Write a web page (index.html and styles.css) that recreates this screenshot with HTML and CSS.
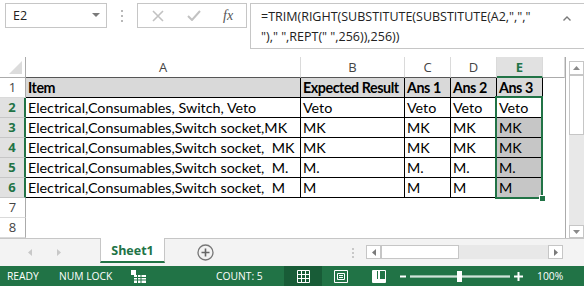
FILE: index.html
```html
<!DOCTYPE html>
<html>
<head>
  <title>Sheet1 - Excel</title>
  <link rel="stylesheet" href="styles.css">
</head>
<body>
  <div class="formula-bar">
    <div class="name-box">
      <span>E2</span>
      <svg width="8" height="5" viewBox="0 0 8 5"><path d="M0 0h8L4 4z" fill="#7a7a7a"/></svg>
    </div>
    <div class="grip"><span></span><span></span><span></span></div>
    <div class="fx-box">
      <svg class="fx-x" width="12" height="12" viewBox="0 0 12 12"><path d="M1 1l10 10M11 1L1 11" stroke="#c2c2c2" stroke-width="1.6"/></svg>
      <svg class="fx-ok" width="14" height="11" viewBox="0 0 14 11"><path d="M1 6l4 4L13 1" stroke="#c2c2c2" stroke-width="2" fill="none"/></svg>
      <span class="fx">fx</span>
    </div>
    <div class="formula">
      <div class="formula-text">
        <div class="fline">=TRIM(RIGHT(SUBSTITUTE(SUBSTITUTE(A2,",","</div>
        <div class="fline">")," ",REPT(" ",256)),256))</div>
      </div>
      <svg class="formula-caret" width="8" height="5" viewBox="0 0 8 5"><path d="M0.5 4.5L4 1l3.5 3.5" stroke="#7a7a7a" stroke-width="1.4" fill="none"/></svg>
    </div>
  </div>

  <div class="sheet-wrap">
    <div class="grid">
      <div class="corner"><svg width="13" height="13" viewBox="0 0 13 13"><path d="M13 0v13H0z" fill="#dcdcdc"/></svg></div>
      <div class="col-head t">A</div>
      <div class="col-head t">B</div>
      <div class="col-head t">C</div>
      <div class="col-head t">D</div>
      <div class="col-head sel">E</div>
      <div class="col-head"></div>

      <div class="row-head">1</div>
      <div class="c hd">Item</div>
      <div class="c hd">Expected Result</div>
      <div class="c hd">Ans 1</div>
      <div class="c hd">Ans 2</div>
      <div class="c hd">Ans 3</div>
      <div class="blank"></div>

      <div class="row-head sel">2</div>
      <div class="c">Electrical,Consumables, Switch, Veto</div>
      <div class="c">Veto</div>
      <div class="c">Veto</div>
      <div class="c">Veto</div>
      <div class="c">Veto</div>
      <div class="blank"></div>

      <div class="row-head sel">3</div>
      <div class="c">Electrical,Consumables,Switch socket,MK</div>
      <div class="c">MK</div>
      <div class="c">MK</div>
      <div class="c">MK</div>
      <div class="c picked">MK</div>
      <div class="blank"></div>

      <div class="row-head sel">4</div>
      <div class="c">Electrical,Consumables,Switch socket,&nbsp; MK</div>
      <div class="c">MK</div>
      <div class="c">MK</div>
      <div class="c">MK</div>
      <div class="c picked">MK</div>
      <div class="blank"></div>

      <div class="row-head sel">5</div>
      <div class="c">Electrical,Consumables,Switch socket,&nbsp; M.</div>
      <div class="c">M.</div>
      <div class="c">M.</div>
      <div class="c">M.</div>
      <div class="c picked">M.</div>
      <div class="blank"></div>

      <div class="row-head sel">6</div>
      <div class="c">Electrical,Consumables,Switch socket,&nbsp; M</div>
      <div class="c">M</div>
      <div class="c">M</div>
      <div class="c">M</div>
      <div class="c picked">M</div>
      <div class="blank"></div>

      <div class="row-head">7</div>
      <div class="blank wide"></div>
      <div class="row-head">8</div>
      <div class="blank wide"></div>
    </div>

    <div class="selection"></div>
    <div class="fill-handle"></div>

    <div class="vscroll">
      <div class="sb-btn"><svg width="7" height="4" viewBox="0 0 7 4"><path d="M0 4h7L3.5 0z" fill="#8a8a8a"/></svg></div>
      <div class="sb-thumb v"></div>
      <div class="sb-track"></div>
      <div class="sb-btn"><svg width="7" height="4" viewBox="0 0 7 4"><path d="M0 0h7L3.5 4z" fill="#8a8a8a"/></svg></div>
    </div>
  </div>

  <div class="tabs">
    <div class="tab-nav">
      <svg width="4" height="7" viewBox="0 0 4 7"><path d="M4 0v7L0 3.5z" fill="#c8c8c8"/></svg>
      <svg width="4" height="7" viewBox="0 0 4 7"><path d="M0 0v7l4-3.5z" fill="#c8c8c8"/></svg>
    </div>
    <div class="tab">Sheet1</div>
    <div class="add-sheet">
      <svg width="17" height="17" viewBox="0 0 17 17"><circle cx="8.5" cy="8.5" r="7.5" fill="none" stroke="#777" stroke-width="1.3"/><path d="M8.5 4.5v8M4.5 8.5h8" stroke="#666" stroke-width="1.6"/></svg>
    </div>
    <div class="grip h"><span></span><span></span><span></span></div>
    <div class="hscroll">
      <div class="sb-btn"><svg width="4" height="7" viewBox="0 0 4 7"><path d="M4 0v7L0 3.5z" fill="#7a7a7a"/></svg></div>
      <div class="sb-thumb h"></div>
      <div class="sb-track"></div>
      <div class="sb-btn"><svg width="4" height="7" viewBox="0 0 4 7"><path d="M0 0v7l4-3.5z" fill="#7a7a7a"/></svg></div>
    </div>
  </div>

  <div class="status">
    <span class="st ready">READY</span>
    <span class="st numlock">NUM LOCK</span>
    <span class="st macro">
      <svg width="15" height="13" viewBox="0 0 15 13">
        <rect x="0" y="0" width="5" height="5" fill="#fff"/>
        <rect x="3" y="5" width="12" height="8" fill="#fff"/>
        <path d="M3 7.5h12M3 10h12M6.5 5v8M10 5v8" stroke="#217346" stroke-width="1"/>
      </svg>
    </span>
    <span class="st count">COUNT: 5</span>
    <span class="view active">
      <svg width="13" height="13" viewBox="0 0 13 13"><path d="M0.5 0.5h12v12h-12zM4.5 0.5v12M8.5 0.5v12M0.5 4.5h12M0.5 8.5h12" stroke="#fff" fill="none"/></svg>
    </span>
    <span class="view">
      <svg width="14" height="13" viewBox="0 0 14 13"><path d="M0.5 0.5h13v12h-13zM3.5 3.5h7v6h-7zM5 5.5h4M5 7.5h4" stroke="#fff" fill="none"/></svg>
    </span>
    <span class="view">
      <svg width="14" height="13" viewBox="0 0 14 13"><path d="M0.5 0.5h13v12h-13z" stroke="#fff" fill="none"/><rect x="1" y="1" width="4" height="8" fill="#fff"/><rect x="6" y="1" width="2" height="11" fill="#fff"/><rect x="1" y="9" width="12" height="3" fill="#fff"/></svg>
    </span>
    <span class="zoom">
      <svg width="128" height="13" viewBox="0 0 128 13"><path d="M0 6.5h6M10 6.5h100M114 6.5h9M118.5 2v9" stroke="#fff" stroke-width="2"/><path d="M10 6.5h100" stroke="#cfe3d8" stroke-width="1"/><rect x="57" y="1" width="5" height="11" fill="#fff"/></svg>
    </span>
    <span class="st pct">100%</span>
  </div>
</body>
</html>
```

FILE: styles.css
```css
* {
  margin: 0;
  padding: 0;
  box-sizing: border-box;
}

body {
  width: 584px;
  height: 286px;
  overflow: hidden;
  background: #fff;
  font-family: 'Open Sans', 'Liberation Sans', sans-serif;
  color: #222;
}

/* Formula bar */
.formula-bar {
  display: flex;
  align-items: flex-start;
  height: 57px;
  padding: 3px 0 0 5px;
}

.name-box {
  width: 102px;
  height: 25px;
  border: 1px solid #c6c6c6;
  display: flex;
  align-items: center;
  justify-content: space-between;
  padding: 0 6px 0 7px;
  font-size: 12.5px;
}

.grip {
  width: 30px;
  height: 25px;
  display: flex;
  flex-direction: column;
  align-items: center;
  justify-content: center;
  gap: 3px;
}

.grip span {
  width: 2px;
  height: 2px;
  background: #b8b8b8;
}

.fx-box {
  width: 110px;
  height: 25px;
  border: 1px solid #c6c6c6;
  display: flex;
  align-items: center;
  padding-left: 14px;
}

.fx-ok {
  margin-left: 23px;
}

.fx {
  margin-left: 22px;
  font-family: 'Liberation Serif', serif;
  font-style: italic;
  font-size: 14px;
  color: #555;
}

.formula {
  flex: 1;
  margin-left: 3px;
  height: 46px;
  border: 1px solid #c6c6c6;
  border-right: none;
  display: flex;
  justify-content: space-between;
  padding: 3px 13px 0 10px;
}

.formula-text {
  font-size: 12.5px;
  line-height: 20px;
  color: #222;
}

.fline {
  white-space: pre;
}

.formula-caret {
  margin-top: 9px;
}

/* Sheet */
.sheet-wrap {
  display: flex;
  height: 181px;
  position: relative;
}

.grid {
  display: grid;
  grid-template-columns: 26px 275px 104px 46px 46px 46px 22px;
  grid-template-rows: 21px repeat(8, 20px);
  width: 566px;
  border-right: 1px solid #ababab;
}

.corner {
  border-right: 1px solid #ababab;
  border-bottom: 1px solid #ababab;
  display: flex;
  align-items: flex-end;
  justify-content: flex-end;
  padding: 0 3px 3px 0;
}

.col-head {
  border-right: 1px solid #dadada;
  border-bottom: 1px solid #ababab;
  text-align: center;
  font-size: 13px;
  line-height: 20px;
  color: #444;
}

.col-head.t {
  border-bottom-color: #555;
}

.col-head.sel {
  background: #e1e1e1;
  color: #217346;
  font-weight: 700;
  border-bottom: 2px solid #217346;
}

.row-head {
  border-right: 1px solid #ababab;
  border-bottom: 1px solid #dadada;
  text-align: center;
  font-size: 13px;
  line-height: 19px;
  color: #444;
}

.row-head.sel {
  background: #e1e1e1;
  color: #217346;
  font-weight: 700;
  border-right: 2px solid #217346;
  border-bottom-color: #c6c6c6;
}

.c {
  border-right: 1px solid #000;
  border-bottom: 1px solid #000;
  padding: 1px 0 0 2px;
  font-family: Lato, 'Liberation Sans', sans-serif;
  font-size: 14.3px;
  line-height: 18px;
  color: #000;
  white-space: nowrap;
  overflow: hidden;
}

.c.hd {
  background: #d9d9d9;
  font-weight: 700;
  letter-spacing: -0.45px;
}

.c.picked {
  background: #c6c6c6;
}

.blank.wide {
  grid-column: span 6;
}

.selection {
  position: absolute;
  left: 495px;
  top: 39px;
  width: 48px;
  height: 103px;
  border: 2px solid #217346;
}

.fill-handle {
  position: absolute;
  left: 539px;
  top: 138px;
  width: 7px;
  height: 7px;
  background: #217346;
  border: 1px solid #fff;
}

/* Scrollbars */
.vscroll {
  flex: 1;
  display: flex;
  flex-direction: column;
  padding: 4px 0 0 3px;
}

.sb-btn {
  background: #fff;
  border: 1px solid #c6c6c6;
  display: flex;
  align-items: center;
  justify-content: center;
}

.vscroll .sb-btn {
  height: 14px;
}

.vscroll .sb-btn:last-child {
  height: 13px;
}

.sb-thumb {
  background: #fff;
  border: 1px solid #c6c6c6;
}

.sb-thumb.v {
  height: 60px;
}

.sb-track {
  flex: 1;
  background: #e8e8e8;
}

.tabs {
  height: 28px;
  display: flex;
  align-items: flex-start;
  background: #f3f3f3;
  border-top: 1px solid #c6c6c6;
}

.tab-nav {
  width: 100px;
  height: 27px;
  display: flex;
  align-items: center;
  gap: 25px;
  padding-left: 28px;
}

.tab {
  width: 65px;
  height: 25px;
  margin-top: -1px;
  background: #fff;
  border-left: 1px solid #c6c6c6;
  border-right: 1px solid #c6c6c6;
  border-bottom: 2px solid #217346;
  text-align: center;
  font-size: 12.5px;
  font-weight: 700;
  line-height: 25px;
  color: #217346;
}

.add-sheet {
  margin: 5px 0 0 32px;
  height: 17px;
}

.grip.h {
  width: 6px;
  margin-left: 136px;
  height: 27px;
  gap: 2px;
}

.grip.h span {
  background: #c8c8c8;
}

.hscroll {
  display: flex;
  width: 197px;
  height: 14px;
  margin: 6px 0 0 10px;
}

.hscroll .sb-btn {
  width: 15px;
}

.sb-thumb.h {
  width: 78px;
}

/* Status bar */
.status {
  height: 20px;
  background: #217346;
  display: flex;
  align-items: center;
  color: #fff;
  font-size: 10.3px;
}

.st {
  display: block;
  white-space: nowrap;
}

.ready {
  width: 59px;
  padding-left: 7px;
}

.numlock {
  width: 72px;
}

.macro {
  width: 85px;
  height: 13px;
}

.count {
  width: 68px;
}

.view {
  width: 38px;
  height: 20px;
  display: flex;
  align-items: center;
  justify-content: center;
}

.view.active {
  background: #185c37;
}

.zoom {
  height: 13px;
  margin-left: 2px;
}

.pct {
  margin-left: 9px;
}
```
